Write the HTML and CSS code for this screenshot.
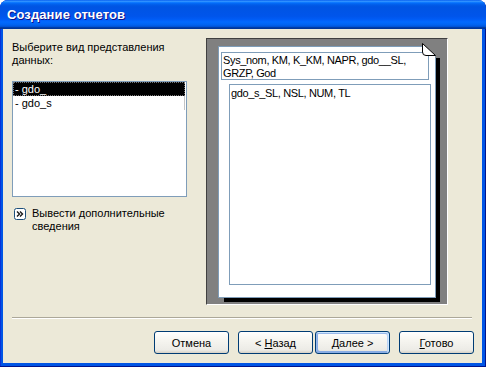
FILE: index.html
```html
<!DOCTYPE html>
<html>
<head>
<meta charset="utf-8">
<link rel="stylesheet" href="styles.css">
</head>
<body>
<div class="window">
  <div class="titlebar"><span class="title">Создание отчетов</span></div>
  <div class="client">
    <div class="main">
      <div class="left">
        <div class="label">Выберите вид представления<br>данных:</div>
        <div class="listbox">
          <div class="item sel">- gdo_</div>
          <div class="item mark">- gdo_s</div>
        </div>
        <div class="more">
          <span class="more-icon">
            <svg width="12" height="12" viewBox="0 0 12 12">
              <rect x="0.5" y="0.5" width="11" height="11" rx="2" fill="#fff" stroke="#1c4f7c"/>
              <path d="M3 3.5 L5.5 6 L3 8.5 M6 3.5 L8.5 6 L6 8.5" fill="none" stroke="#1a1a1a" stroke-width="1.4"/>
            </svg>
          </span>
          <span class="more-text">Вывести дополнительные<br>сведения</span>
        </div>
      </div>
      <div class="preview">
        <div class="page">
          <div class="box1">Sys_nom, KM, K_KM, NAPR, gdo__SL,<br>GRZP, God</div>
          <div class="box2">gdo_s_SL, NSL, NUM, TL</div>
          <svg class="fold" width="20" height="16" viewBox="0 0 20 16">
            <path d="M0 0 H20 V15 H13.5 V12.5 L0.5 1 Z" fill="#808080"/>
            <path d="M0.5 0.5 L13.5 12.5 L4 12.5 Q0.5 12.5 0.5 9 Z" fill="#fff" stroke="#000" stroke-width="1"/>
          </svg>
        </div>
      </div>
    </div>
    <div class="sep"></div>
    <div class="buttons">
      <button class="btn gap-wide">Отмена</button>
      <button class="btn gap-narrow">&lt; <u>Н</u>азад</button>
      <button class="btn default gap-wide"><u>Д</u>алее &gt;</button>
      <button class="btn"><u>Г</u>отово</button>
    </div>
  </div>
</div>
</body>
</html>
```

FILE: styles.css
```css
html, body {
  margin: 0;
  padding: 0;
}
body {
  width: 486px;
  height: 367px;
  overflow: hidden;
  background: #fff;
  font-family: "Liberation Sans", Arial, sans-serif;
  font-size: 11px;
  color: #000;
}
.window {
  width: 486px;
  height: 367px;
  display: flex;
  flex-direction: column;
  background: #0055e5;
  border-radius: 8px 8px 0 0;
  box-shadow: inset -1px -1px 0 #00138c, inset 1px 0 0 #0831d9;
}
.titlebar {
  height: 29px;
  flex: none;
  box-sizing: border-box;
  padding: 7px 0 0 7px;
  border-radius: 8px 8px 0 0;
  background: linear-gradient(180deg, #0058ee 0%, #3593ff 4%, #288eff 6%, #127dff 8%, #036ffc 10%, #0262ee 14%, #0057e5 20%, #0054e3 24%, #0055eb 56%, #005bf5 66%, #026afe 76%, #0062ef 86%, #0052d6 92%, #0040ab 94%, #003092 100%);
}
.title {
  display: block;
  color: #fff;
  font-weight: bold;
  font-size: 13px;
  line-height: 15px;
  text-shadow: 1px 1px #0f1089;
  letter-spacing: 0.1px;
}
.client {
  flex: 1;
  margin: 0 4px 4px 3px;
  background: #ece9d8;
  padding: 9px 8px 9px 9px;
  display: flex;
  flex-direction: column;
}
.main {
  display: flex;
  height: 267px;
  flex: none;
}
.left {
  width: 175px;
  margin-right: 19px;
  flex: none;
}
.label {
  margin-top: 3px;
  line-height: 13px;
}
.listbox {
  margin-top: 14px;
  height: 116px;
  box-sizing: border-box;
  border: 1px solid #7f9db9;
  background: #fff;
  padding: 0 1px 0 0;
}
.item {
  height: 14px;
  line-height: 14px;
  padding-left: 2px;
}
.item.sel {
  background: #000;
  color: #fff;
  outline: 1px dotted #777;
  outline-offset: -1px;
}
.item.mark {
  box-shadow: inset -1px 0 0 #c4c4c4;
}
.more {
  margin-top: 11px;
  display: flex;
  align-items: flex-start;
}
.more-icon {
  margin-left: 2px;
  width: 12px;
  height: 12px;
  display: block;
}
.more-icon svg {
  display: block;
}
.more-text {
  margin-left: 6px;
  margin-top: -1px;
  line-height: 13px;
}
.preview {
  width: 242px;
  height: 267px;
  box-sizing: border-box;
  border: 1px solid;
  border-color: #404040 #fff #fff #404040;
  background: #808080;
  padding: 7px 0 0 11px;
}
.page {
  position: relative;
  width: 218px;
  height: 252px;
  box-sizing: border-box;
  border: 1px solid #7f9db9;
  background: #fff;
  box-shadow: 5px 5px 0 -1px #000;
  padding: 5px 0 0 2px;
}
.box1 {
  width: 208px;
  height: 28px;
  box-sizing: border-box;
  border: 1px solid #7f9db9;
  padding: 1px 0 0 1px;
  line-height: 12.5px;
  white-space: nowrap;
  overflow: hidden;
  letter-spacing: -0.35px;
}
.box2 {
  margin-top: 4px;
  margin-left: 8px;
  width: 202px;
  height: 201px;
  box-sizing: border-box;
  border: 1px solid #7f9db9;
  padding: 2px 0 0 1px;
  line-height: 13px;
  letter-spacing: -0.35px;
}
.fold {
  position: absolute;
  left: 203px;
  top: -4px;
  display: block;
}
.sep {
  margin-top: 12px;
  margin-right: 2px;
  height: 0;
  border-top: 1px solid #aca899;
  border-bottom: 1px solid #fff;
}
.buttons {
  margin-top: 12px;
  display: flex;
  justify-content: flex-end;
}
.btn {
  width: 75px;
  height: 23px;
  box-sizing: border-box;
  border: 1px solid #003c74;
  border-radius: 3px;
  background: linear-gradient(180deg, #fff 0%, #f6f5f0 40%, #ecebe6 86%, #d6d0c5 100%);
  font-family: "Liberation Sans", Arial, sans-serif;
  font-size: 11px;
  color: #000;
  padding: 0;
  margin: 0;
}
.btn u {
  text-decoration: underline;
}
.btn.default {
  box-shadow: inset -1px 1px #cee7ff, inset 1px 2px #98b8ea, inset -2px 2px #bcd4f6, inset 1px -1px #89ade4, inset 2px -2px #89ade4;
}
.gap-wide {
  margin-right: 9px;
}
.gap-narrow {
  margin-right: 2px;
}
```
